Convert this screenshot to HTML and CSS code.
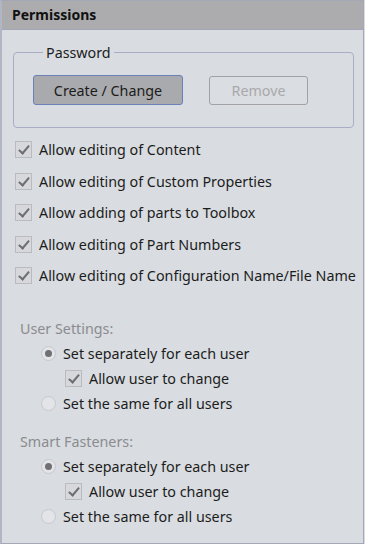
FILE: index.html
```html
<!DOCTYPE html>
<html lang="en">
  <head>
    <meta charset="UTF-8" />
    <meta name="viewport" content="width=device-width, initial-scale=1" />
    <title>Permissions</title>
    <link rel="stylesheet" href="styles.css">
  </head>
  <body>
    <div class="panel">
      <div class="panel-header">Permissions</div>
      <div class="panel-body">
        <!-- Password group -->
        <fieldset class="group">
          <legend>Password</legend>
          <div class="buttons">
            <button class="btn btn-active">Create / Change</button>
            <button class="btn btn-disabled">Remove</button>
          </div>
        </fieldset>

        <ul class="checks">
          <li><span class="check"></span>Allow editing of Content</li>
          <li><span class="check"></span>Allow editing of Custom Properties</li>
          <li><span class="check"></span>Allow adding of parts to Toolbox</li>
          <li><span class="check"></span>Allow editing of Part Numbers</li>
          <li><span class="check"></span>Allow editing of Configuration Name/File Name</li>
        </ul>

        <!-- User settings -->
        <div class="section">
          <div class="section-title">User Settings:</div>
          <div class="option"><span class="radio on"></span>Set separately for each user</div>
          <div class="option sub"><span class="check"></span>Allow user to change</div>
          <div class="option"><span class="radio"></span>Set the same for all users</div>
        </div>

        <!-- Smart fasteners -->
        <div class="section">
          <div class="section-title">Smart Fasteners:</div>
          <div class="option"><span class="radio on"></span>Set separately for each user</div>
          <div class="option sub"><span class="check"></span>Allow user to change</div>
          <div class="option"><span class="radio"></span>Set the same for all users</div>
        </div>
      </div>
    </div>
  </body>
</html>
```

FILE: styles.css
```css
* {
  margin: 0;
  padding: 0;
  box-sizing: border-box;
}
body {
  font-family: "Noto Sans", "Open Sans", sans-serif;
  font-size: 14.3px;
  color: #1c1c1c;
  background: #d9dce1;
}
.panel {
  width: 364px;
  height: 544px;
  border: 1px solid #a3a7b6;
  border-left: 2px solid #b2b6c4;
  background: #d9dce1;
  overflow: hidden;
}
.panel-header {
  height: 29px;
  background: #acacae;
  border-bottom: 1px solid #a2a6b8;
  font-weight: bold;
  font-size: 14px;
  padding: 4px 0 0 10px;
  color: #111;
}
.panel-body {
  padding: 13px 9px 0 11px;
}
/* Password fieldset */
.group {
  border: 1px solid #a9adc6;
  border-radius: 4px;
  padding: 13px 0 0 19px;
  height: 85px;
  width: 341px;
}
.group legend {
  margin-left: 10px;
  padding: 0 3px;
}
.buttons {
  display: flex;
  gap: 26px;
}
.btn {
  font-family: inherit;
  font-size: 14.3px;
  height: 30px;
  border-radius: 3px;
}
.btn-active {
  width: 150px;
  background: #a9aaad;
  border: 1px solid #6b80b8;
  color: #1c1c1c;
}
.btn-disabled {
  width: 99px;
  margin-top: 1px;
  height: 29px;
  background: #dadde1;
  border: 1px solid #a2a2a4;
  color: #a9a9ab;
}
/* Checkbox list */
.checks {
  list-style: none;
  margin-top: 6px;
}
.checks li {
  display: flex;
  align-items: center;
  height: 31.5px;
  margin-left: 2px;
  white-space: nowrap;
}
.check {
  width: 17px;
  height: 17px;
  border: 1px solid #b9bbbf;
  background: #d6d8dc;
  margin-right: 7px;
  position: relative;
  flex-shrink: 0;
}
.check::after {
  content: "";
  position: absolute;
  left: 5px;
  top: 1px;
  width: 4px;
  height: 9px;
  border-right: 2px solid #6e6e70;
  border-bottom: 2px solid #6e6e70;
  transform: rotate(40deg);
}
/* Sections with radios */
.section {
  margin-top: 24px;
  padding-left: 7px;
}
.section + .section {
  margin-top: 13px;
}
.section-title {
  color: #8b8c8f;
  height: 25px;
  line-height: 25px;
}
.option {
  display: flex;
  align-items: center;
  height: 25px;
  padding-left: 21px;
  white-space: nowrap;
}
.option.sub {
  padding-left: 45px;
}
.radio {
  width: 15px;
  height: 15px;
  border-radius: 50%;
  border: 1px solid #c6c8cc;
  background: #e2e4e7;
  margin-right: 7px;
  position: relative;
  flex-shrink: 0;
}
.radio.on::after {
  content: "";
  position: absolute;
  left: 3px;
  top: 3px;
  width: 7px;
  height: 7px;
  border-radius: 50%;
  background: #707072;
}
```
